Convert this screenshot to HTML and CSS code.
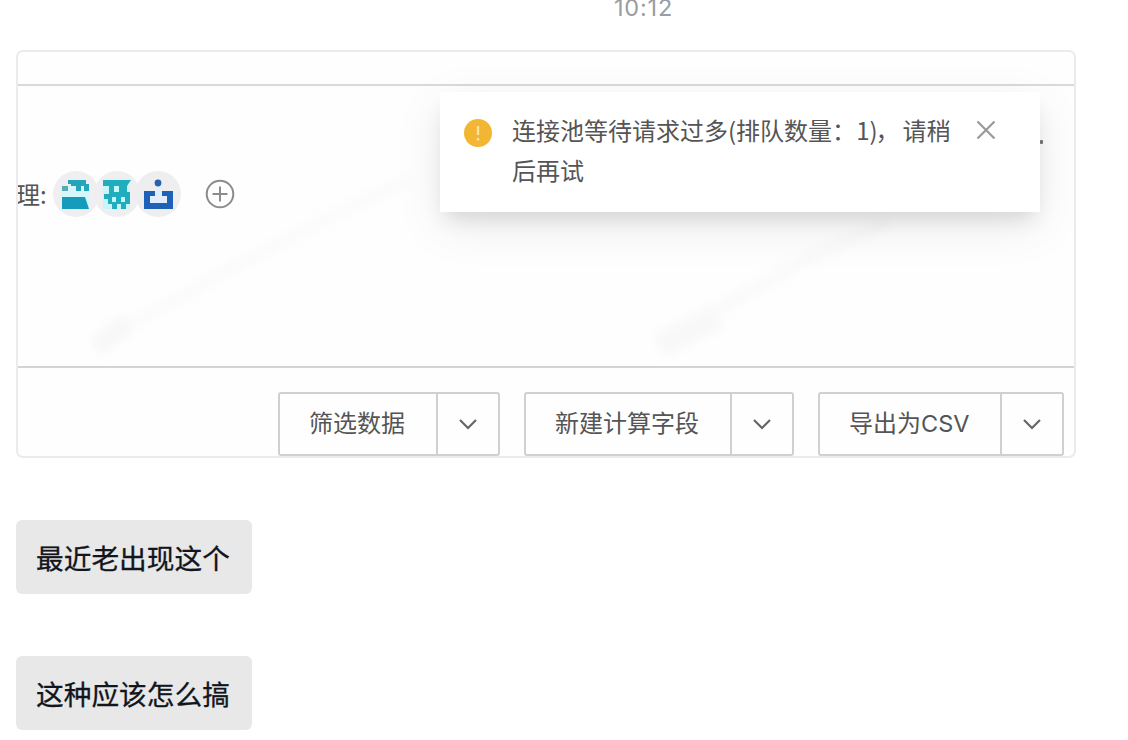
FILE: index.html
```html
<!DOCTYPE html>
<html lang="zh-CN">
<head>
  <meta charset="UTF-8" />
  <title>聊天记录</title>
  <link rel="stylesheet" href="styles.css">
</head>
<body>

  <div class="chat">
    <div class="time">10:12</div>

    <div class="shot">
      <svg class="watermark" viewBox="0 0 1056 404">
        <path d="M78 296 L110 270" stroke-width="18" opacity="0.8" />
        <path d="M110 274 L210 218 L330 156 L390 128" stroke-width="12" opacity="0.35" />
        <path d="M642 294 L700 264" stroke-width="24" opacity="0.7" />
        <path d="M700 258 L790 206 L870 170" stroke-width="13" opacity="0.4" />
      </svg>

      <div class="shot-top"></div>

      <div class="shot-main">
        <div class="owners">
          <span class="owner-label">理:</span>
          <svg class="avatar" viewBox="0 0 46 46">
            <circle cx="23" cy="23" r="23" fill="#efeff1" />
            <path d="M9 14h27v23H9z" fill="#d5f6fa" />
            <path d="M15 9h18v4h3v7h-5v-5h-3v5h-5v-5h-5v-2h-3z" fill="#24a5ba" />
            <path d="M9 15h6v5H9z" fill="#5aa9b8" />
            <path d="M9 26h23l4 12H9z" fill="#159cbd" />
          </svg>
          <svg class="avatar" viewBox="0 0 46 46">
            <circle cx="23" cy="23" r="23" fill="#efeff1" />
            <path d="M9 14h27v24H9z" fill="#c9f5f8" />
            <path d="M9 9h28l-4 6v6h3v12h-4v5h-5v-5h-4v5h-5v-5h-4v-5h-4v-5h5v-8H9zM20 15v6h5v-6zM18 26v5h4v-5zM27 26v5h4v-5z" fill="#20aebe" fill-rule="evenodd" />
          </svg>
          <svg class="avatar" viewBox="0 0 46 46">
            <circle cx="23" cy="23" r="23" fill="#eeeef1" />
            <path d="M14 20h20v15H14z" fill="#e1edfc" />
            <circle cx="23" cy="12" r="3.4" fill="#2862ae" />
            <path d="M9 20h11v5h-5v7h17v-7h-5v-5h11v18H9z" fill="#1d62b7" />
            <path d="M21 19h4v8h-4z" fill="#e1edfc" />
          </svg>
          <svg class="add" viewBox="0 0 30 30">
            <circle cx="15" cy="15" r="13.3" />
            <path d="M7.5 15h15M15 7.5v15" />
          </svg>
        </div>
        <span class="dot"></span>
      </div>

      <div class="shot-bottom">
        <div class="btn">
          <span class="btn-text">筛选数据</span>
          <span class="btn-arrow"><svg viewBox="0 0 20 12"><path d="M2 2l8 8 8-8" /></svg></span>
        </div>
        <div class="btn">
          <span class="btn-text">新建计算字段</span>
          <span class="btn-arrow"><svg viewBox="0 0 20 12"><path d="M2 2l8 8 8-8" /></svg></span>
        </div>
        <div class="btn">
          <span class="btn-text btn-csv">导出为<span class="latin">CSV</span></span>
          <span class="btn-arrow"><svg viewBox="0 0 20 12"><path d="M2 2l8 8 8-8" /></svg></span>
        </div>
      </div>

      <div class="toast">
        <svg class="warn" viewBox="0 0 28 28">
          <circle cx="14" cy="14" r="14" />
          <path d="M14 7v9M14 19v2.5" />
        </svg>
        <div class="toast-text">连接池等待请求过多(排队数量：<span class="num">1)</span><span class="comma">，</span>请稍<br>后再试</div>
        <svg class="close" viewBox="0 0 20 20"><path d="M1.5 1.5l17 17M18.5 1.5l-17 17" /></svg>
      </div>
    </div>

    <div class="bubble">最近老出现这个</div>
    <div class="bubble">这种应该怎么搞</div>
  </div>

</body>
</html>
```

FILE: styles.css
```css
* {
  box-sizing: border-box;
}
body {
  margin: 0;
  height: 740px;
  overflow: hidden;
  background: #fff;
  font-family: "Noto Sans CJK SC", sans-serif;
}
.chat {
  padding: 0 16px;
}
.time {
  height: 50px;
  padding-left: 159px;
  line-height: 15px;
  text-align: center;
  font-family: Inter, sans-serif;
  font-size: 23.5px;
  letter-spacing: 0.8px;
  color: #9a9da1;
}
.shot {
  position: relative;
  display: flex;
  flex-direction: column;
  width: 1060px;
  height: 408px;
  border: 2px solid #ebebeb;
  border-radius: 7px;
  overflow: hidden;
  background: #fefefe;
  color: #555;
}
.watermark {
  position: absolute;
  left: 0;
  top: 0;
  width: 1056px;
  height: 404px;
  fill: none;
  stroke: #f5f5f5;
  filter: blur(5px);
}
.shot-top {
  height: 34px;
  border-bottom: 2px solid #d9d9d9;
}
.shot-main {
  position: relative;
  height: 282px;
  padding-top: 85px;
  border-bottom: 2px solid #d4d4d4;
}
.owners {
  display: flex;
  align-items: center;
}
.owner-label {
  width: 37px;
  margin-left: -2px;
  font-size: 24px;
  line-height: 44px;
}
.avatar {
  width: 46px;
  height: 46px;
  margin-right: -5px;
}
.add {
  width: 30px;
  height: 30px;
  margin-left: 29px;
  fill: none;
  stroke: #8c8c8c;
  stroke-width: 2;
}
.dot {
  position: absolute;
  left: 1022px;
  top: 54px;
  width: 3px;
  height: 4px;
  border-radius: 1px;
  background: #777;
}
.shot-bottom {
  display: flex;
  justify-content: flex-end;
  gap: 24px;
  padding: 24px 10px 0 0;
}
.btn {
  display: flex;
  height: 64px;
  border: 2px solid #d0d0d0;
  border-radius: 3px;
  background: #fefefe;
}
.btn-text {
  padding: 0 31px 0 29px;
  font-size: 24px;
  line-height: 56px;
}
.btn-csv {
  width: 180px;
  padding-right: 0;
}
.latin {
  font-family: Inter, sans-serif;
  font-size: 23.5px;
}
.btn-arrow {
  display: flex;
  align-items: center;
  justify-content: center;
  width: 62px;
  border-left: 2px solid #d0d0d0;
}
.btn-arrow svg {
  width: 20px;
  height: 12px;
  fill: none;
  stroke: #666;
  stroke-width: 2.2;
}
.toast {
  position: absolute;
  left: 422px;
  top: 40px;
  display: flex;
  width: 600px;
  height: 120px;
  padding: 18px 24px 0;
  background: #fff;
  box-shadow: 0 12px 20px -6px rgba(0,0,0,0.12), 0 14px 50px rgba(0,0,0,0.08);
}
.warn {
  width: 28px;
  height: 28px;
  margin-top: 9px;
  fill: #f2b632;
  stroke: #fbe2a0;
  stroke-width: 2.4;
}
.warn circle {
  stroke: none;
}
.toast-text {
  width: 460px;
  margin-left: 20px;
  font-size: 24px;
  line-height: 40px;
  white-space: nowrap;
}
.comma {
  margin-left: -2px;
  margin-right: 3px;
}
.close {
  width: 20px;
  height: 20px;
  margin: 10px 0 0 4px;
  fill: none;
  stroke: #999;
  stroke-width: 2.2;
}
.bubble {
  width: 236px;
  height: 74px;
  margin-top: 62px;
  padding: 0 20px;
  border-radius: 6px;
  background: #e8e8e8;
  color: #12161c;
  font-size: 27.7px;
  line-height: 74px;
  white-space: nowrap;
  -webkit-text-stroke: 0.3px #12161c;
}
```
